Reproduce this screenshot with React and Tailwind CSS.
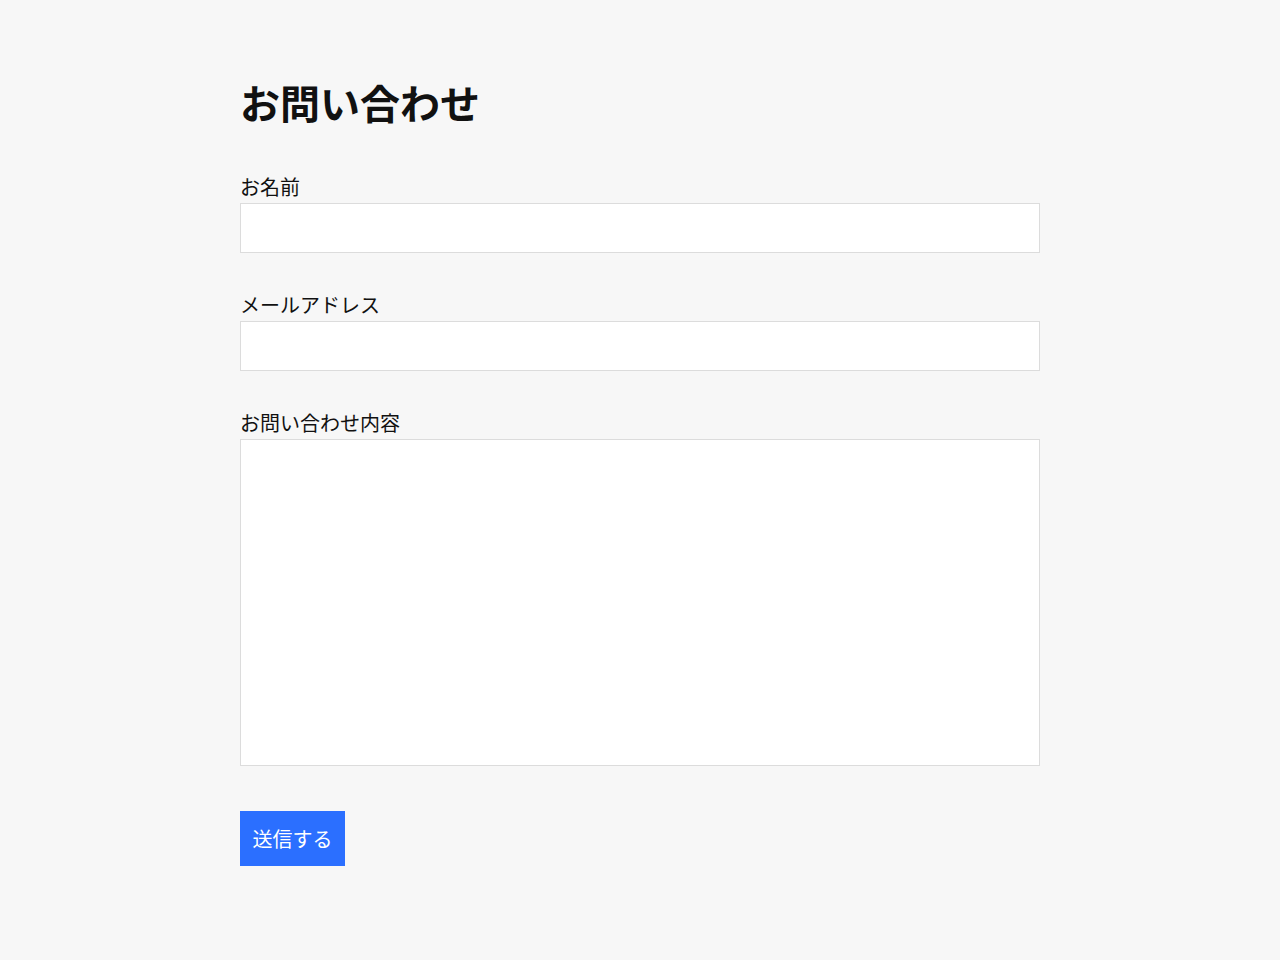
import React from 'react';

const font = { fontFamily: '"Noto Sans CJK JP", "Noto Sans", sans-serif' };

const Field = ({ label, children }) => (
  <div className="flex flex-col">
    <label className="mb-[4px] text-[20px] leading-[24px] text-[#111]">{label}</label>
    {children}
  </div>
);

export default function App() {
  return (
    <div className="min-h-[960px] bg-[#f7f7f7]" style={font}>
      <div className="mx-auto w-[800px] pt-[78px]">
        <h1 className="text-[40px] leading-[48px] font-bold text-[#111]">お問い合わせ</h1>
        <form className="mt-[49px] flex flex-col gap-[40px]" onSubmit={e => e.preventDefault()}>
          <Field label="お名前">
            <input type="text" className="h-[50px] w-full border border-[#dcdcdc] bg-white px-3 outline-none" />
          </Field>
          <Field label="メールアドレス">
            <input type="email" className="h-[50px] w-full border border-[#dcdcdc] bg-white px-3 outline-none" />
          </Field>
          <Field label="お問い合わせ内容">
            <textarea className="h-[327px] w-full resize-none border border-[#dcdcdc] bg-white p-3 outline-none" />
          </Field>
          <div className="pt-[5px]">
            <button type="submit" className="h-[55px] w-[105px] bg-[#2b6fff] text-[20px] text-white">送信する</button>
          </div>
        </form>
      </div>
    </div>
  );
}
